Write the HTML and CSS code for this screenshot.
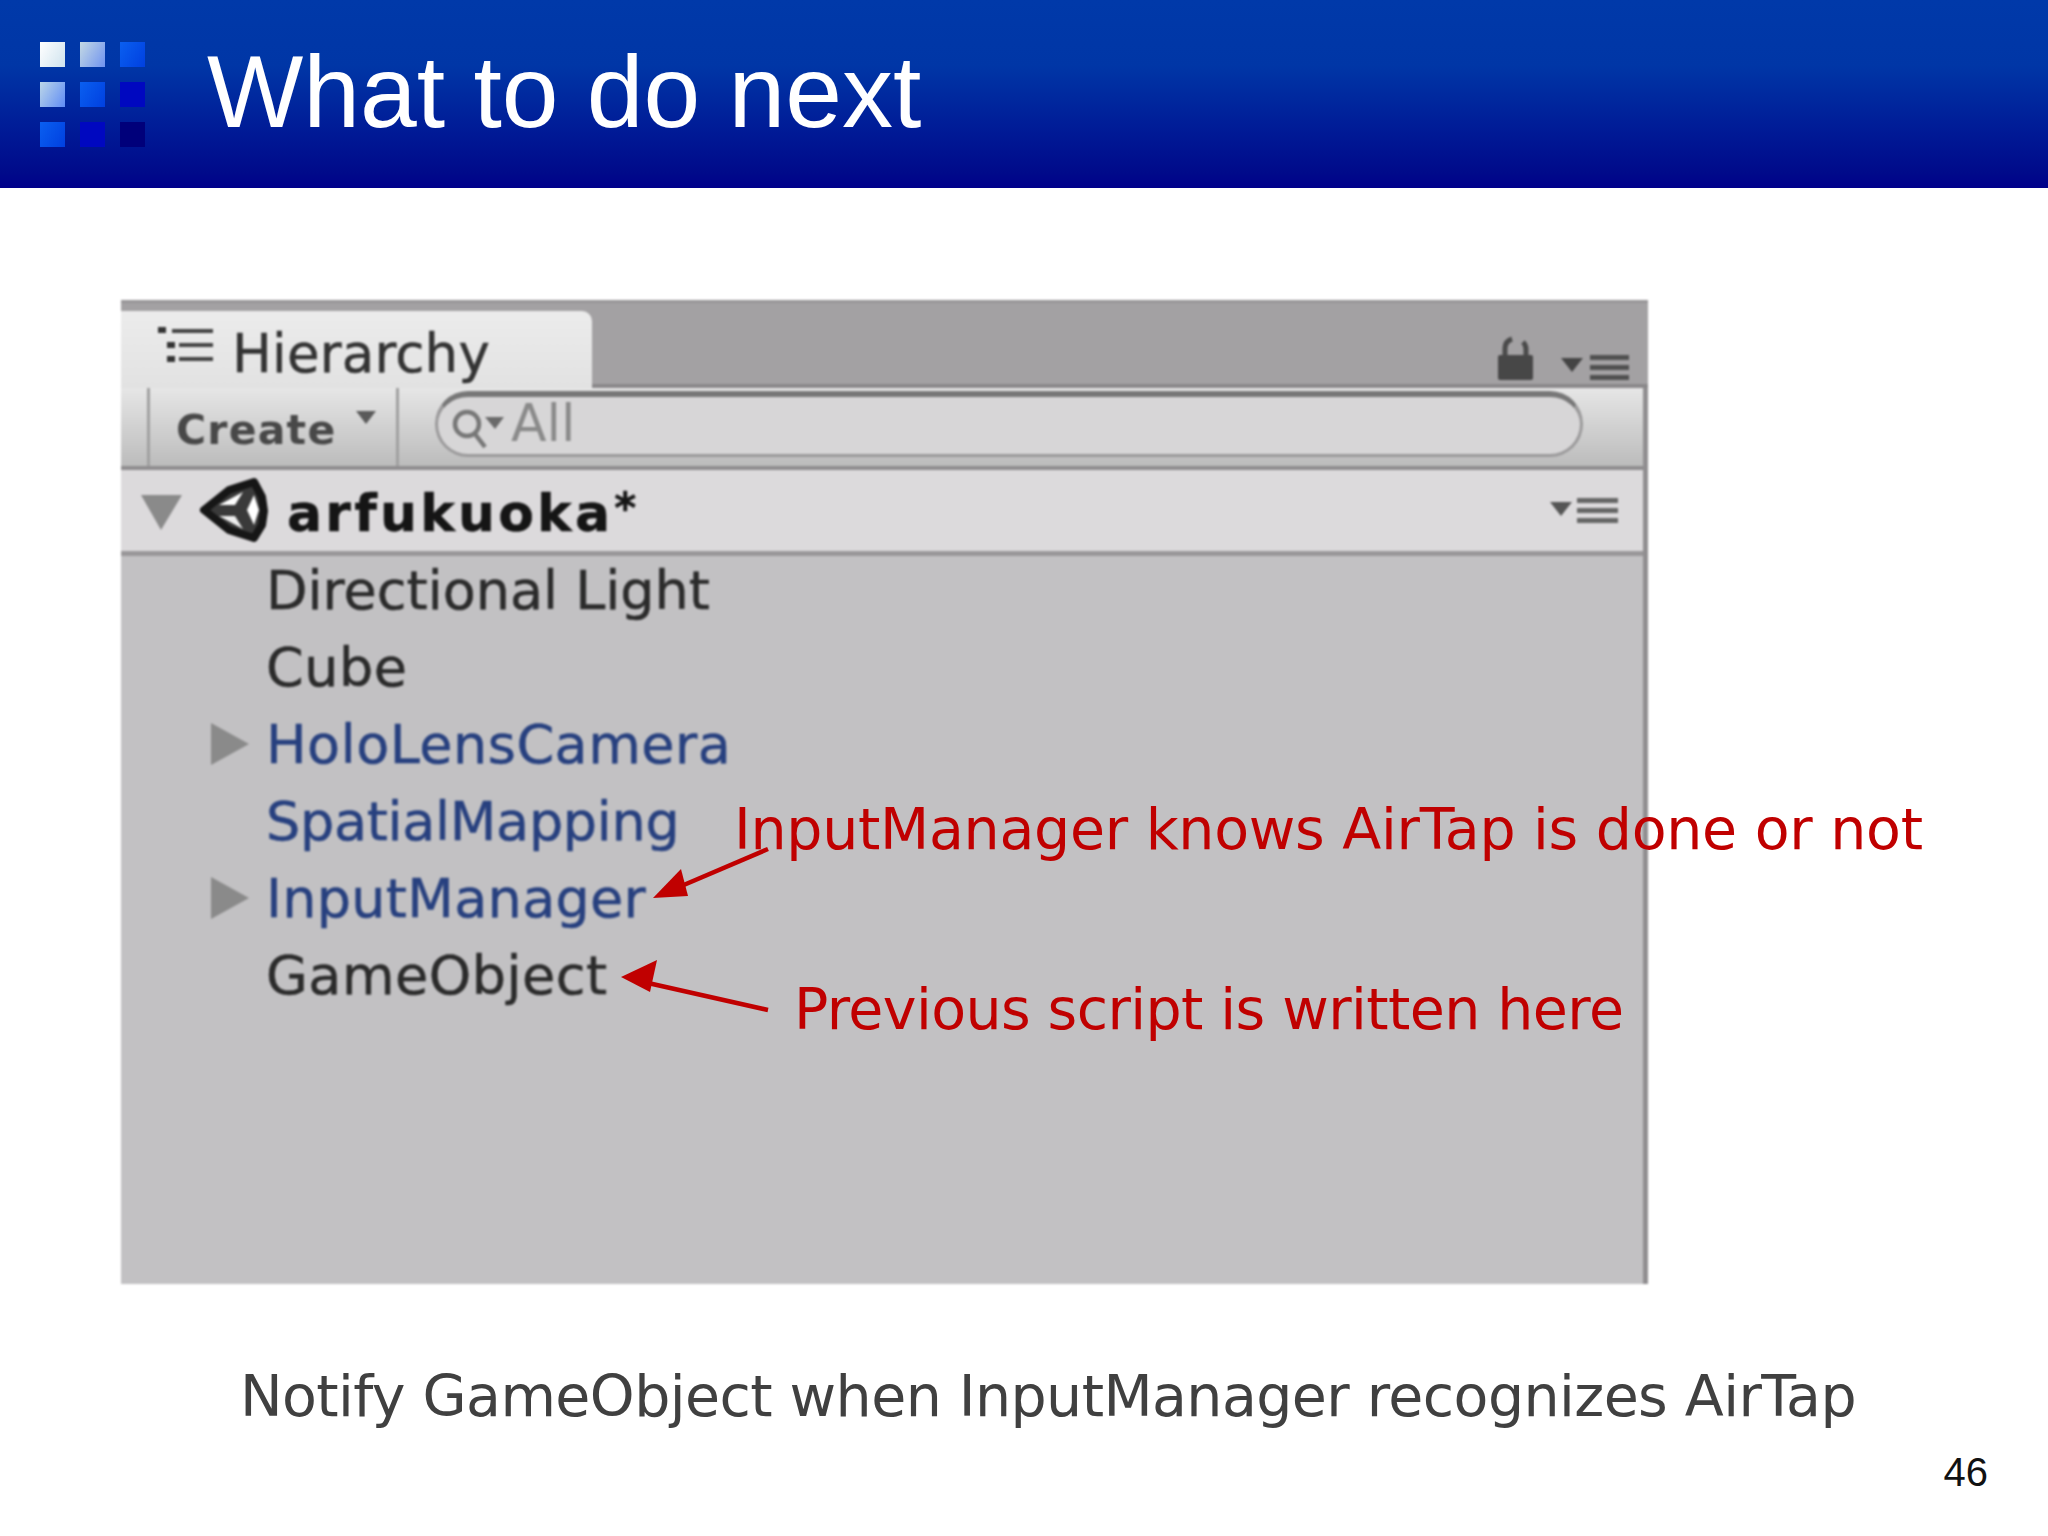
FILE: index.html
```html
<!DOCTYPE html>
<html lang="en">
<head>
<meta charset="utf-8">
<title>What to do next</title>
<link rel="stylesheet" href="styles.css">
</head>
<body>
<div class="slide">
  <header class="header">
    <div class="logo">
      <i class="sq s1"></i><i class="sq s2"></i><i class="sq s3"></i>
      <i class="sq s2b"></i><i class="sq s3b"></i><i class="sq s4"></i>
      <i class="sq s3c"></i><i class="sq s4b"></i><i class="sq s5"></i>
    </div>
    <h1 class="title">What to do next</h1>
  </header>

  <main class="stage">
    <section class="panel">
      <div class="tabbar">
        <div class="tab">
          <svg class="tab-icon" viewBox="0 0 56 38"><g fill="#333"><rect x="0" y="0" width="8" height="6"/><rect x="9" y="15" width="8" height="6"/><rect x="9" y="29" width="8" height="6"/></g><g fill="#444"><rect x="14" y="2" width="41" height="4"/><rect x="21" y="16" width="34" height="4"/><rect x="21" y="30" width="34" height="4"/></g></svg>
          <span class="tab-label">Hierarchy</span>
        </div>
        <div class="tab-tools">
          <svg class="lock" viewBox="0 0 35 44"><path d="M7 20V12A10 10 0 0 1 14 3" fill="none" stroke="#4a4a4a" stroke-width="5"/><path d="M25 6A10 10 0 0 1 28 13V20" fill="none" stroke="#4a4a4a" stroke-width="5"/><rect x="0" y="19" width="35" height="25" rx="2" fill="#474747"/></svg>
          <svg class="menu" viewBox="0 0 68 25"><path d="M0 3h22l-11 14z" fill="#444"/><g fill="#505050"><rect x="29" y="0" width="39" height="5"/><rect x="29" y="10" width="39" height="5"/><rect x="29" y="20" width="39" height="5"/></g></svg>
        </div>
      </div>

      <div class="toolbar">
        <div class="create">
          <span>Create</span>
          <svg class="caret" viewBox="0 0 20 13"><path d="M0 0h20l-10 13z" fill="#5a5a5a"/></svg>
        </div>
        <div class="search-wrap">
          <div class="search">
            <svg class="glass" viewBox="0 0 54 42"><circle cx="15" cy="16" r="12" fill="none" stroke="#777" stroke-width="4.5"/><path d="M23 26l10 13" stroke="#777" stroke-width="4.5"/><path d="M33 9h19l-9 12z" fill="#6a6a6a"/></svg>
            <span>All</span>
          </div>
        </div>
      </div>

      <div class="scene">
        <svg class="fold-down" viewBox="0 0 41 35"><path d="M0 0h41L20 35z" fill="#8a8a8a"/></svg>
        <svg class="unity" viewBox="0 0 70 72">
          <path d="M5 35L30 15 55 7 63 22 65 36 63 50 55 63 30 55Z" fill="#3a3a3a" stroke="#161616" stroke-width="8" stroke-linejoin="round"/>
          <path d="M20 30L44 17 36 30Z" fill="#fff"/>
          <path d="M20 41L44 54 36 41Z" fill="#eee"/>
          <path d="M48 35L55 20 60 35 55 50Z" fill="#fff"/>
        </svg>
        <span class="scene-name">arfukuoka<span class="star">*</span></span>
        <svg class="menu scene-menu" viewBox="0 0 68 25"><path d="M0 4h22l-11 14z" fill="#555"/><g fill="#666"><rect x="27" y="0" width="41" height="5"/><rect x="27" y="10" width="41" height="5"/><rect x="27" y="20" width="41" height="5"/></g></svg>
      </div>

      <ul class="tree">
        <li class="row">Directional Light</li>
        <li class="row ls-wide">Cube</li>
        <li class="row prefab ls-wide"><svg class="fold" viewBox="0 0 38 42"><path d="M0 0l38 21L0 42z" fill="#8a8a8a"/></svg>HoloLensCamera</li>
        <li class="row prefab ls-tight">SpatialMapping</li>
        <li class="row prefab ls-mid"><svg class="fold" viewBox="0 0 38 42"><path d="M0 0l38 21L0 42z" fill="#8a8a8a"/></svg>InputManager</li>
        <li class="row ls-wide">GameObject</li>
      </ul>
    </section>

    <svg class="arrows" viewBox="0 0 2048 1536">
      <g stroke="#c00000" stroke-width="4.5" fill="none">
        <path d="M768 849L672 890"/>
        <path d="M768 1010L648 983"/>
      </g>
      <path d="M653 898L681 869 688 896z" fill="#c00000"/>
      <path d="M621 977L657 960 650 992z" fill="#c00000"/>
    </svg>
    <p class="note note-a">InputManager knows AirTap is done or not</p>
    <p class="note note-b">Previous script is written here</p>
  </main>

  <p class="caption">Notify GameObject when InputManager recognizes AirTap</p>
  <p class="page-no">46</p>
</div>
</body>
</html>
```
FILE: styles.css
```css
* { box-sizing: border-box; }
html, body { margin: 0; padding: 0; background: #fff; }
.slide { width: 2048px; height: 1536px; overflow: hidden; position: relative; display: flex; flex-direction: column; background: #fff; }

.header {
  height: 188px; flex: none; display: flex; align-items: flex-start;
  padding: 42px 0 0 40px;
  background: linear-gradient(#0039a9 0%, #0036a6 35%, #001a96 70%, #000a8a 92%, #00008a 100%);
}
.logo { display: grid; grid-template-columns: repeat(3, 25px); grid-auto-rows: 25px; gap: 15px; flex: none; filter: blur(0.6px); }
.sq { display: block; }
.s1 { background: linear-gradient(120deg, #fff, #cfe3ee); }
.s2 { background: linear-gradient(120deg, #c4d9e4, #6f93f0); }
.s2b { background: linear-gradient(120deg, #bcd6e8, #5f8cf5); }
.s3, .s3b, .s3c { background: linear-gradient(120deg, #0a5ff0, #0040e0); }
.s4, .s4b { background: #0008c0; }
.s5 { background: #00007a; }
.title {
  margin: 0 0 0 62px; font: 400 102px/100px "Liberation Sans", Arial, sans-serif; color: #fff;
  position: relative; top: 0;
}

.stage { flex: none; height: 1096px; padding: 112px 0 0 121px; position: relative; }
.panel {
  width: 1527px; height: 984px; background: #c2c1c3;
  border-right: 5px solid #908e90; font-family: "DejaVu Sans", Verdana, sans-serif;
  display: flex; flex-direction: column; filter: blur(1.1px);
}

.tabbar {
  height: 88px; flex: none; display: flex; justify-content: space-between; align-items: flex-end;
  background: #a3a1a3; border-top: 3px solid #989698; border-bottom: 4px solid #8a888a;
  margin-right: -5px;
}
.tab {
  width: 471px; height: 77px; margin-bottom: -4px; background: linear-gradient(#ececec, #e2e2e2);
  border-radius: 0 10px 0 0; display: flex; align-items: center; gap: 18px; padding: 0 0 4px 37px;
  color: #333; font-size: 53px; line-height: 1; letter-spacing: 0.2px; -webkit-text-stroke: 0.5px currentColor;
}
.tab-label { padding-top: 11px; }
.tab-icon { width: 56px; height: 38px; flex: none; margin-top: -4px; }
.tab-tools { display: flex; align-items: flex-end; gap: 28px; padding: 0 19px 4px 0; }
.lock { width: 35px; height: 44px; display: block; }
.menu { width: 68px; height: 25px; display: block; }

.toolbar {
  height: 82px; flex: none; display: flex; align-items: stretch;
  margin-top: 0; padding-left: 26px;
  background: linear-gradient(#e6e6e6, #bcbcbc);
  border-bottom: 4px solid #8f8d8f;
}
.create {
  width: 252px; display: flex; align-items: center; gap: 22px; padding: 6px 0 0 26px;
  border-left: 3px solid #a0a0a0; border-right: 3px solid #a0a0a0;
  color: #484848; font-size: 41px; font-weight: 700; letter-spacing: 1.2px;
}
.caret { width: 20px; height: 13px; flex: none; margin-top: -26px; margin-left: -2px; }
.search-wrap { flex: 1; display: flex; align-items: center; padding: 0 60px 6px 36px; }
.search {
  flex: 1; height: 66px; border-radius: 33px; background: #d7d6d7;
  border: 3px solid #9b9a9b; border-top: 6px solid #777;
  display: flex; align-items: center; gap: 5px; padding: 0 0 6px 14px;
  color: #8a8a8a; font-size: 52px; line-height: 1;
}
.glass { width: 54px; height: 42px; flex: none; margin-top: 12px; }

.scene {
  height: 86px; flex: none; display: flex; align-items: center; padding: 0 25px 0 20px;
  background: #dcdadc; border-bottom: 5px solid #999799;
}
.fold-down { width: 41px; height: 35px; flex: none; margin-top: 4px; }
.unity { width: 70px; height: 72px; flex: none; margin-left: 17px; }
.scene-name { margin-left: 18px; flex: 1; font-size: 52px; font-weight: 700; color: #151515; letter-spacing: 3.2px; padding-top: 4px; -webkit-text-stroke: 0.5px currentColor; }
.star { font-size: 42px; position: relative; top: -8px; margin-left: 1px; }
.scene-menu { flex: none; }

.tree { list-style: none; margin: 0; padding: 0; }
.row {
  height: 77px; line-height: 70px; padding-left: 145px; position: relative;
  font-size: 54px; color: #2b2b2b; -webkit-text-stroke: 0.5px currentColor;
}
.prefab { color: #27407f; }
.ls-wide { letter-spacing: 0.5px; }
.ls-mid { letter-spacing: 0.3px; }
.ls-tight { letter-spacing: -0.3px; }
.fold { position: absolute; left: 90px; top: 13px; width: 38px; height: 42px; }

.arrows { position: absolute; left: 0; top: -188px; width: 2048px; height: 1536px; pointer-events: none; }
.note {
  position: absolute; margin: 0; white-space: nowrap; color: #c00000;
  font: 400 57px/70px "DejaVu Sans", Verdana, sans-serif;
}
.note-a { left: 734px; top: 606px; letter-spacing: -0.3px; }
.note-b { left: 794px; top: 786px; letter-spacing: -0.6px; }

.caption {
  margin: 0; text-align: center; color: #404040; white-space: nowrap;
  font: 400 57px/70px "DejaVu Sans", Verdana, sans-serif; letter-spacing: -0.58px;
  position: relative; top: 77px; left: 24px;
}
.page-no {
  margin: 0; text-align: right; padding-right: 60px; color: #111;
  font: 400 40px/46px "Liberation Sans", Arial, sans-serif;
  position: relative; top: 95px;
}
```
